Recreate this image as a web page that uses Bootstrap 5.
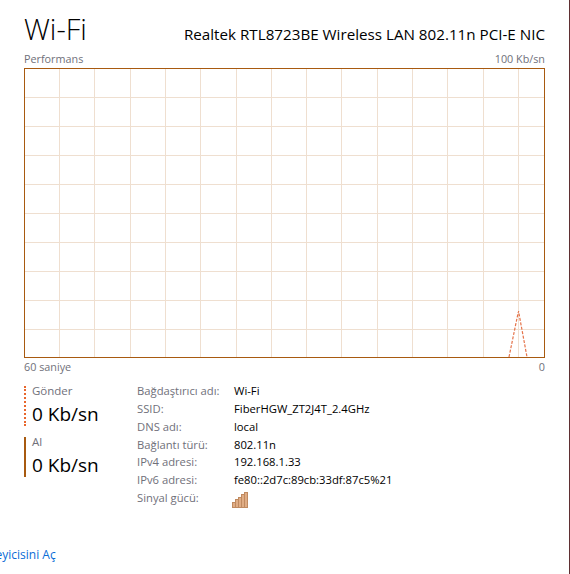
<!DOCTYPE html>
<html lang="tr">
<head>
    <meta charset="UTF-8">
    <meta name="viewport" content="width=device-width, initial-scale=1.0">
    <link rel="stylesheet" href="https://cdn.jsdelivr.net/npm/bootstrap@5.3.0/dist/css/bootstrap.min.css">
    <title>Wi-Fi Performans</title>
    <style>
        html, body {
            height: 100%;
            overflow: hidden;
        }

        body {
            font-family: "Open Sans", "Noto Sans", sans-serif;
            font-size: 11.25px;
            line-height: 18px;
            color: #000;
            background: #fff;
        }

        .wifi-page {
            height: 574px;
            padding: 10px 24px 0 24px;
            border-right: 1px solid #5f2f32;
        }

        .wifi-title {
            font-size: 29px;
            font-weight: 300;
            line-height: 38px;
            margin: 0;
        }

        .wifi-adapter {
            font-size: 15.2px;
            line-height: 20px;
        }

        .axis-label {
            color: #70707a;
            font-size: 10.8px;
            line-height: 16px;
        }

        .axis-top {
            margin-top: 3px;
            padding-bottom: 1px;
        }

        .axis-bottom {
            margin-top: 1px;
        }

        .chart-box {
            display: block;
            width: 521px;
            height: 290px;
        }

        .stats-row {
            margin-top: 11px;
        }

        .stat-col {
            width: 113px;
        }

        .stat-item {
            border-left: 2px solid #a85a10;
            height: 40px;
            padding-left: 6px;
        }

        .stat-item.is-send {
            border-left: 2px dotted #e8662c;
        }

        .stat-label {
            color: #70707a;
            font-size: 11.5px;
            line-height: 14px;
            margin-top: -2px;
        }

        .stat-value {
            font-size: 19px;
            line-height: 26px;
            margin-top: 3px;
        }

        .stat-gap {
            gap: 11px;
        }

        .info-grid {
            display: grid;
            grid-template-columns: 97px auto;
            grid-auto-rows: 17.85px;
            margin-top: -4px;
        }

        .info-key {
            color: #70707a;
        }

        .signal-icon {
            display: block;
            margin: 3px 0 0 -2px;
        }

        .monitor-link {
            display: block;
            margin: 39px 0 0 -84px;
            color: #0a6cd6;
            font-size: 12px;
            white-space: nowrap;
            text-decoration: none;
        }
    </style>
</head>
<body>
    <div class="wifi-page">
        <div class="d-flex justify-content-between align-items-end">
            <h1 class="wifi-title">Wi-Fi</h1>
            <div class="wifi-adapter mb-1">Realtek RTL8723BE Wireless LAN 802.11n PCI-E NIC</div>
        </div>
        <div class="d-flex justify-content-between axis-label axis-top">
            <span>Performans</span>
            <span>100 Kb/sn</span>
        </div>
        <svg class="chart-box" id="chart" viewBox="0 0 521 290" xmlns="http://www.w3.org/2000/svg"></svg>
        <div class="d-flex justify-content-between axis-label axis-bottom">
            <span>60 saniye</span>
            <span>0</span>
        </div>
        <div class="d-flex stats-row">
            <div class="stat-col d-flex flex-column stat-gap">
                <div class="stat-item is-send">
                    <div class="stat-label">Gönder</div>
                    <div class="stat-value">0 Kb/sn</div>
                </div>
                <div class="stat-item">
                    <div class="stat-label">Al</div>
                    <div class="stat-value">0 Kb/sn</div>
                </div>
            </div>
            <div class="info-grid">
                <div class="info-key">Bağdaştırıcı adı:</div><div>Wi-Fi</div>
                <div class="info-key">SSID:</div><div>FiberHGW_ZT2J4T_2.4GHz</div>
                <div class="info-key">DNS adı:</div><div>local</div>
                <div class="info-key">Bağlantı türü:</div><div>802.11n</div>
                <div class="info-key">IPv4 adresi:</div><div>192.168.1.33</div>
                <div class="info-key">IPv6 adresi:</div><div>fe80::2d7c:89cb:33df:87c5%21</div>
                <div class="info-key">Sinyal gücü:</div>
                <div>
                    <svg class="signal-icon" width="16" height="16" viewBox="0 0 16 16" xmlns="http://www.w3.org/2000/svg">
                        <g fill="#e0ad85" stroke="#c08a60" stroke-width="1">
                            <rect x="0.5" y="10.5" width="3" height="5"/>
                            <rect x="3.5" y="7.5" width="3" height="8"/>
                            <rect x="6.5" y="5.5" width="3" height="10"/>
                            <rect x="9.5" y="2.5" width="3" height="13"/>
                            <rect x="12.5" y="0.5" width="3" height="15"/>
                        </g>
                    </svg>
                </div>
            </div>
        </div>
        <a class="monitor-link" href="#">Kaynak İzleyicisini Aç</a>
    </div>
    <script>
    document.addEventListener("DOMContentLoaded", function () {
        const chart = document.getElementById("chart");
        let out = "";
        // grid lines, 35.3px wide cells scrolled a bit, 10 rows
        for (let i = 0; i < 14; i++) {
            const x = Math.round(35.3 * i + 35);
            out += '<line x1="' + (x + 0.5) + '" y1="0" x2="' + (x + 0.5) + '" y2="290" stroke="#efdfd0"/>';
        }
        for (let i = 1; i < 10; i++) {
            const y = 29 * i;
            out += '<line x1="0" y1="' + (y + 0.5) + '" x2="521" y2="' + (y + 0.5) + '" stroke="#efdfd0"/>';
        }
        out += '<polyline points="485,289 494.5,243 503,289" fill="none" stroke="#e5734a" stroke-width="1.2" stroke-dasharray="3 1.5"/>';
        out += '<rect x="0.5" y="0.5" width="520" height="289" fill="none" stroke="#a85a10"/>';
        chart.innerHTML = out;
    });
    </script>
</body>
</html>
